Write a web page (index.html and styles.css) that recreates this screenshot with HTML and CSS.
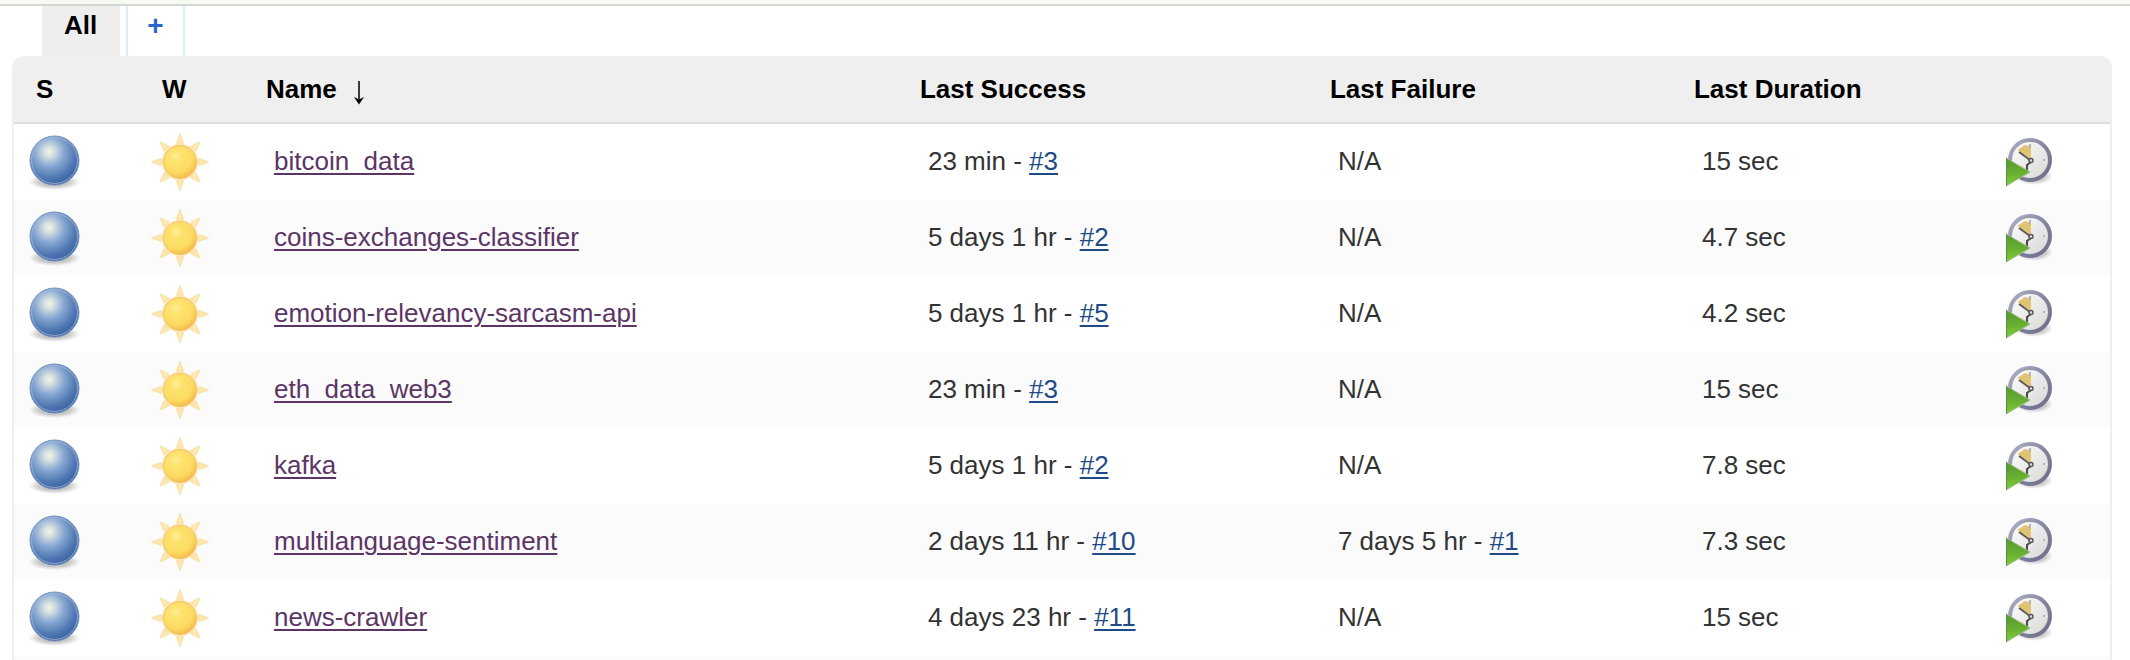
FILE: index.html
```
<!DOCTYPE html>
<html lang="en">
<head>
<meta charset="utf-8">
<title>Dashboard</title>
<link rel="stylesheet" href="styles.css">
<script src="jobs.js" defer></script>
</head>
<body>
<svg class="sprite" aria-hidden="true">
  <defs>
    <radialGradient id="ballFill" cx="0.39" cy="0.32" r="0.72">
      <stop offset="0" stop-color="#f4f5e2"/>
      <stop offset="0.12" stop-color="#dbe4e2"/>
      <stop offset="0.42" stop-color="#88a8d2"/>
      <stop offset="0.75" stop-color="#4f77b2"/>
      <stop offset="1" stop-color="#33609f"/>
    </radialGradient>
    <radialGradient id="shade">
      <stop offset="0" stop-color="#000" stop-opacity="0.5"/>
      <stop offset="0.6" stop-color="#000" stop-opacity="0.28"/>
      <stop offset="1" stop-color="#000" stop-opacity="0"/>
    </radialGradient>
    <radialGradient id="sunFill" cx="0.38" cy="0.32" r="0.72">
      <stop offset="0" stop-color="#fff09a"/>
      <stop offset="0.25" stop-color="#fde36f"/>
      <stop offset="0.7" stop-color="#fbdb62"/>
      <stop offset="1" stop-color="#f3b748"/>
    </radialGradient>
    <linearGradient id="rimFill" x1="0" y1="0" x2="1" y2="1">
      <stop offset="0" stop-color="#b0b2c6"/>
      <stop offset="0.5" stop-color="#85859f"/>
      <stop offset="1" stop-color="#6c6a8a"/>
    </linearGradient>
    <linearGradient id="faceFill" x1="0" y1="0" x2="1" y2="1">
      <stop offset="0" stop-color="#ffffff"/>
      <stop offset="1" stop-color="#d5d6d3"/>
    </linearGradient>
    <linearGradient id="playFill" x1="0" y1="0" x2="0" y2="1">
      <stop offset="0" stop-color="#57962f"/>
      <stop offset="0.5" stop-color="#67ad32"/>
      <stop offset="1" stop-color="#82cc3c"/>
    </linearGradient>
    <symbol id="ball" viewBox="0 0 52 64">
      <ellipse cx="26.500" cy="52" rx="26" ry="8" fill="url(#shade)" opacity="0.7"/>
      <circle cx="26.500" cy="30.500" r="24.500" fill="url(#ballFill)" stroke="#7391c0" stroke-width="1"/>
      <circle cx="26.500" cy="30.500" r="23" fill="none" stroke="#a3b9da" stroke-width="1" opacity="0.8"/>
    </symbol>
    <symbol id="sun" viewBox="0 0 64 64">
      <g fill="#fde9ae" stroke="#fbdca4" stroke-width="1" stroke-linejoin="round">
        <path d="M32 3.500L35.500 13Q32 15.500 28.500 13Z"/>
        <path d="M32 3.500L35.500 13Q32 15.500 28.500 13Z" transform="rotate(45 32 32)"/>
        <path d="M32 3.500L35.500 13Q32 15.500 28.500 13Z" transform="rotate(90 32 32)"/>
        <path d="M32 3.500L35.500 13Q32 15.500 28.500 13Z" transform="rotate(135 32 32)"/>
        <path d="M32 3.500L35.500 13Q32 15.500 28.500 13Z" transform="rotate(180 32 32)"/>
        <path d="M32 3.500L35.500 13Q32 15.500 28.500 13Z" transform="rotate(225 32 32)"/>
        <path d="M32 3.500L35.500 13Q32 15.500 28.500 13Z" transform="rotate(270 32 32)"/>
        <path d="M32 3.500L35.500 13Q32 15.500 28.500 13Z" transform="rotate(315 32 32)"/>
      </g>
      <circle cx="32" cy="32" r="18" fill="#fbe3b0"/>
      <circle cx="32" cy="32" r="16.500" fill="url(#sunFill)" stroke="#f5c465" stroke-width="1"/>
    </symbol>
    <symbol id="clock" viewBox="0 0 48 48">
      <ellipse cx="28" cy="38" rx="19" ry="9" fill="url(#shade)" opacity="0.7"/>
      <circle cx="24" cy="22" r="20" fill="url(#faceFill)" stroke="url(#rimFill)" stroke-width="4"/>
      <path d="M11.500 12L19 7L25 9V21Z" fill="#dfc474"/>
      <path d="M13 14L24 22" stroke="#5c5a52" stroke-width="2"/>
      <path d="M24 6v4M37 22h2" stroke="#b5b6b3" stroke-width="2"/>
      <path d="M21 33V27L25 24" stroke="#4a4a48" stroke-width="2" fill="none"/>
      <circle cx="25" cy="22.500" r="2" fill="#ddd" stroke="#555" stroke-width="1.500"/>
      <path d="M0 20L24 34L0 48Z" fill="url(#playFill)"/>
      <path d="M0 20L24 34L0 48" fill="none" stroke="#9cbd84" stroke-width="1"/>
      <path d="M0.500 20V48" stroke="#5f8a4c" stroke-width="1"/>
    </symbol>
  </defs>
</svg>
<div class="topbar"></div>
<main class="main">
  <nav class="tabs">
    <a class="tab tab-active" href="#all">All</a>
    <a class="tab tab-new" href="#new" title="New View">+</a>
  </nav>
  <div class="pane">
    <table class="jobs">
      <colgroup>
        <col class="col-status"><col class="col-weather"><col class="col-name"><col class="col-success"><col class="col-failure"><col><col class="col-build">
      </colgroup>
      <thead>
        <tr>
          <th class="icon-head" scope="col">S</th>
          <th class="icon-head" scope="col">W</th>
          <th scope="col" aria-sort="descending"><span class="sorted">Name<svg class="sort" viewBox="0 0 12 24" aria-hidden="true"><path d="M6 0V20" stroke="#000" stroke-width="1.500"/><path d="M1 16Q4 17 6 19Q8 17 11 16L6 23.500Z"/></svg></span></th>
          <th scope="col">Last Success</th>
          <th scope="col">Last Failure</th>
          <th scope="col">Last Duration</th>
          <th></th>
        </tr>
      </thead>
      <tbody id="jobs"></tbody>
    </table>
  </div>
</main>
</body>
</html>
```
FILE: jobs.js
```
const jobs = [
  ["bitcoin_data", "23 min", "#3", "", "", "15 sec"],
  ["coins-exchanges-classifier", "5 days 1 hr", "#2", "", "", "4.7 sec"],
  ["emotion-relevancy-sarcasm-api", "5 days 1 hr", "#5", "", "", "4.2 sec"],
  ["eth_data_web3", "23 min", "#3", "", "", "15 sec"],
  ["kafka", "5 days 1 hr", "#2", "", "", "7.8 sec"],
  ["multilanguage-sentiment", "2 days 11 hr", "#10", "7 days 5 hr", "#1", "7.3 sec"],
  ["news-crawler", "4 days 23 hr", "#11", "", "", "15 sec"]
];

const run = (age, build) => age ? `${age} - <a class="build" href="#build">${build}</a>` : "N/A";

document.getElementById("jobs").innerHTML = jobs.map(([name, okAge, ok, badAge, bad, time]) => `
  <tr>
    <td class="status"><svg class="ball" role="img" aria-label="Success"><use href="#ball"/></svg></td>
    <td class="weather"><svg class="sun" role="img" aria-label="100%"><use href="#sun"/></svg></td>
    <td><a class="job" href="#job">${name}</a></td>
    <td>${run(okAge, ok)}</td>
    <td>${run(badAge, bad)}</td>
    <td>${time}</td>
    <td class="action"><button class="schedule" type="button" aria-label="Schedule a build for ${name}"><svg class="clock"><use href="#clock"/></svg></button></td>
  </tr>`).join("") + '<tr class="next"><td colspan="7"></td></tr>';
```
FILE: styles.css
```
body {
  margin: 0;
  background: #fff;
  color: #333;
  font: 26px/32px "Liberation Sans", Arial, Helvetica, sans-serif;
}

.sprite {
  position: absolute;
  width: 0;
  height: 0;
}

.topbar {
  height: 4px;
  background: #f6faf2;
  border-bottom: 2px solid #d3d7cf;
}

.main {
  padding: 0 18px 0 12px;
}

.tabs {
  display: flex;
  gap: 6px;
  padding-left: 30px;
}

.tab {
  box-sizing: border-box;
  height: 50px;
  padding: 3px 23px 0 22px;
  color: #000;
  font-weight: bold;
  text-decoration: none;
}

.tab-active {
  background: #eee;
}

.tab-new {
  padding: 4px 19px 0;
  border: solid #d9edff;
  border-width: 0 2px;
  color: #2a65d0;
  font-size: 28px;
}

.pane {
  border: solid #efefef;
  border-width: 0 2px;
  border-radius: 12px 12px 0 0;
  overflow: hidden;
}

.jobs {
  width: 100%;
  table-layout: fixed;
  border-collapse: separate;
  border-spacing: 0;
}

.col-status { width: 126px; }
.col-weather { width: 118px; }
.col-name { width: 31.2%; }
.col-success { width: 19.56%; }
.col-failure { width: 17.37%; }
.col-build { width: 112px; }

th {
  height: 66px;
  padding: 0 8px;
  background: #efefef;
  border-bottom: 2px solid #ddd;
  color: #000;
  text-align: left;
}

.icon-head {
  padding-left: 22px;
}

.sorted {
  display: flex;
  align-items: flex-end;
  gap: 16px;
}

.sort {
  width: 12px;
  height: 24px;
}

td {
  height: 74px;
  padding: 0 0 2px 16px;
}

tbody tr:nth-child(even) {
  background: #fbfbfb;
}

.status,
.weather,
.action {
  height: 76px;
  padding: 0 0 0 8px;
}

.status { padding-left: 14px; }

.next td {
  height: 4px;
  padding: 0;
}

a {
  text-decoration-thickness: 2px;
  text-underline-offset: 3px;
}

.job { color: #5c3566; }
.build { color: #204a87; }

svg { display: block; }

.ball {
  width: 52px;
  height: 64px;
}

.sun {
  width: 64px;
  height: 64px;
}

.clock {
  width: 48px;
  height: 48px;
}

.schedule {
  display: block;
  padding: 0;
  border: 0;
  background: none;
}
```
